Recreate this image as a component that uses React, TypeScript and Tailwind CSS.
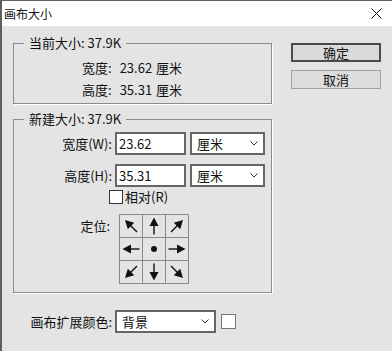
const Arrow = ({ angle }: { angle: number }) => (
  <svg width="20" height="20" viewBox="0 0 20 20">
    <g transform={`rotate(${angle} 10 10)`} fill="#111">
      <polygon points="10,1.5 14.5,10 5.5,10" />
      <rect x="9.3" y="9" width="1.4" height="9.5" />
    </g>
  </svg>
);

const Chevron = () => (
  <svg width="8" height="5" viewBox="0 0 8 5">
    <polyline points="0.5,0.5 4,4 7.5,0.5" fill="none" stroke="#333" strokeWidth="1" />
  </svg>
);

const Select = ({ value, className }: { value: string; className: string }) => (
  <div
    className={`flex h-[23px] items-center justify-between border-2 border-[#666] bg-white pl-[5px] pr-[5px] ${className}`}
  >
    <span className="leading-[19px]">{value}</span>
    <Chevron />
  </div>
);

const Input = ({ value }: { value: string }) => (
  <div className="flex h-[23px] w-[71px] items-center border-2 border-[#666] bg-white pl-[2px]">
    <span className="leading-[19px]">{value}</span>
  </div>
);

const cells = [
  { kind: "arrow", angle: -45 },
  { kind: "arrow", angle: 0 },
  { kind: "arrow", angle: 45 },
  { kind: "arrow", angle: -90 },
  { kind: "dot", angle: 0 },
  { kind: "arrow", angle: 90 },
  { kind: "arrow", angle: -135 },
  { kind: "arrow", angle: 180 },
  { kind: "arrow", angle: 135 },
];

export default function App() {
  return (
    <div className="h-[351px] w-[392px] overflow-hidden border-l-2 border-t border-[#5f5f5f] bg-[#e4e4e4] font-['Noto_Sans_CJK_SC','Noto_Sans',sans-serif] text-[13px] text-[#111]">
      {/* title bar */}
      <div className="flex h-[25px] items-center justify-between bg-white pl-[2px] pr-[10px]">
        <span className="text-[12px] leading-[25px]">画布大小</span>
        <svg width="11" height="11" viewBox="0 0 11 11">
          <path d="M0.5 0.5 L10.5 10.5 M10.5 0.5 L0.5 10.5" stroke="#111" strokeWidth="1" />
        </svg>
      </div>

      <div className="flex pl-[11px] pt-[8px]">
        {/* left column */}
        <div className="flex w-[259px] flex-col">
          <fieldset className="border border-[#8c8c8c] pb-[2px] pt-[5px] shadow-[1px_1px_0_#fff]">
            <legend className="ml-[10px] px-[5px] leading-[18px]">当前大小: 37.9K</legend>
            <div className="pl-[68px]">
              <div className="flex h-[22px] items-center">
                <span>宽度:</span>
                <span className="ml-[8px]">23.62</span>
                <span className="ml-[4px]">厘米</span>
              </div>
              <div className="flex h-[22px] items-center">
                <span>高度:</span>
                <span className="ml-[8px]">35.31</span>
                <span className="ml-[4px]">厘米</span>
              </div>
            </div>
          </fieldset>

          <fieldset className="mt-[6px] border border-[#8c8c8c] pb-[8px] pt-[4px] shadow-[1px_1px_0_#fff]">
            <legend className="ml-[10px] px-[5px] leading-[18px]">新建大小: 37.9K</legend>
            <div className="flex h-[23px] items-center">
              <span className="w-[98px] text-right">宽度(W):</span>
              <div className="ml-[3px]">
                <Input value="23.62" />
              </div>
              <Select value="厘米" className="ml-[4px] w-[75px]" />
            </div>
            <div className="mt-[9px] flex h-[23px] items-center">
              <span className="w-[98px] text-right">高度(H):</span>
              <div className="ml-[3px]">
                <Input value="35.31" />
              </div>
              <Select value="厘米" className="ml-[4px] w-[75px]" />
            </div>
            <div className="flex h-[20px] items-center pl-[95px]">
              <div className="h-[14px] w-[14px] border-[1.5px] border-[#333] bg-white" />
              <span className="ml-[2px]">相对(R)</span>
            </div>
            <div className="mt-[7px] flex items-start">
              <span className="mt-[3px] w-[96px] text-right leading-[18px]">定位:</span>
              <div className="ml-[9px] grid w-[70px] grid-cols-3 border-l border-t border-[#8a8a8a]">
                {cells.map((c, i) => (
                  <div
                    key={i}
                    className="flex h-[23px] items-center justify-center border-b border-r border-[#8a8a8a]"
                  >
                    {c.kind === "dot" ? (
                      <div className="h-[6px] w-[6px] rounded-full bg-[#111]" />
                    ) : (
                      <Arrow angle={c.angle} />
                    )}
                  </div>
                ))}
              </div>
            </div>
          </fieldset>

          <div className="mt-[17px] flex items-center">
            <span className="w-[99px] text-right">画布扩展颜色:</span>
            <Select value="背景" className="ml-[3px] w-[101px]" />
            <div className="ml-[5px] h-[15px] w-[15px] border border-[#777] bg-white" />
          </div>
        </div>

        {/* buttons */}
        <div className="ml-[19px] mt-[9px] flex flex-col gap-[8px]">
          <button className="flex h-[19px] w-[90px] items-center justify-center border-2 border-[#4a4a4a] bg-[#dadada] leading-[15px]">
            确定
          </button>
          <button className="flex h-[19px] w-[90px] items-center justify-center border border-[#a0a0a0] bg-[#dcdcdc] leading-[17px]">
            取消
          </button>
        </div>
      </div>
    </div>
  );
}
